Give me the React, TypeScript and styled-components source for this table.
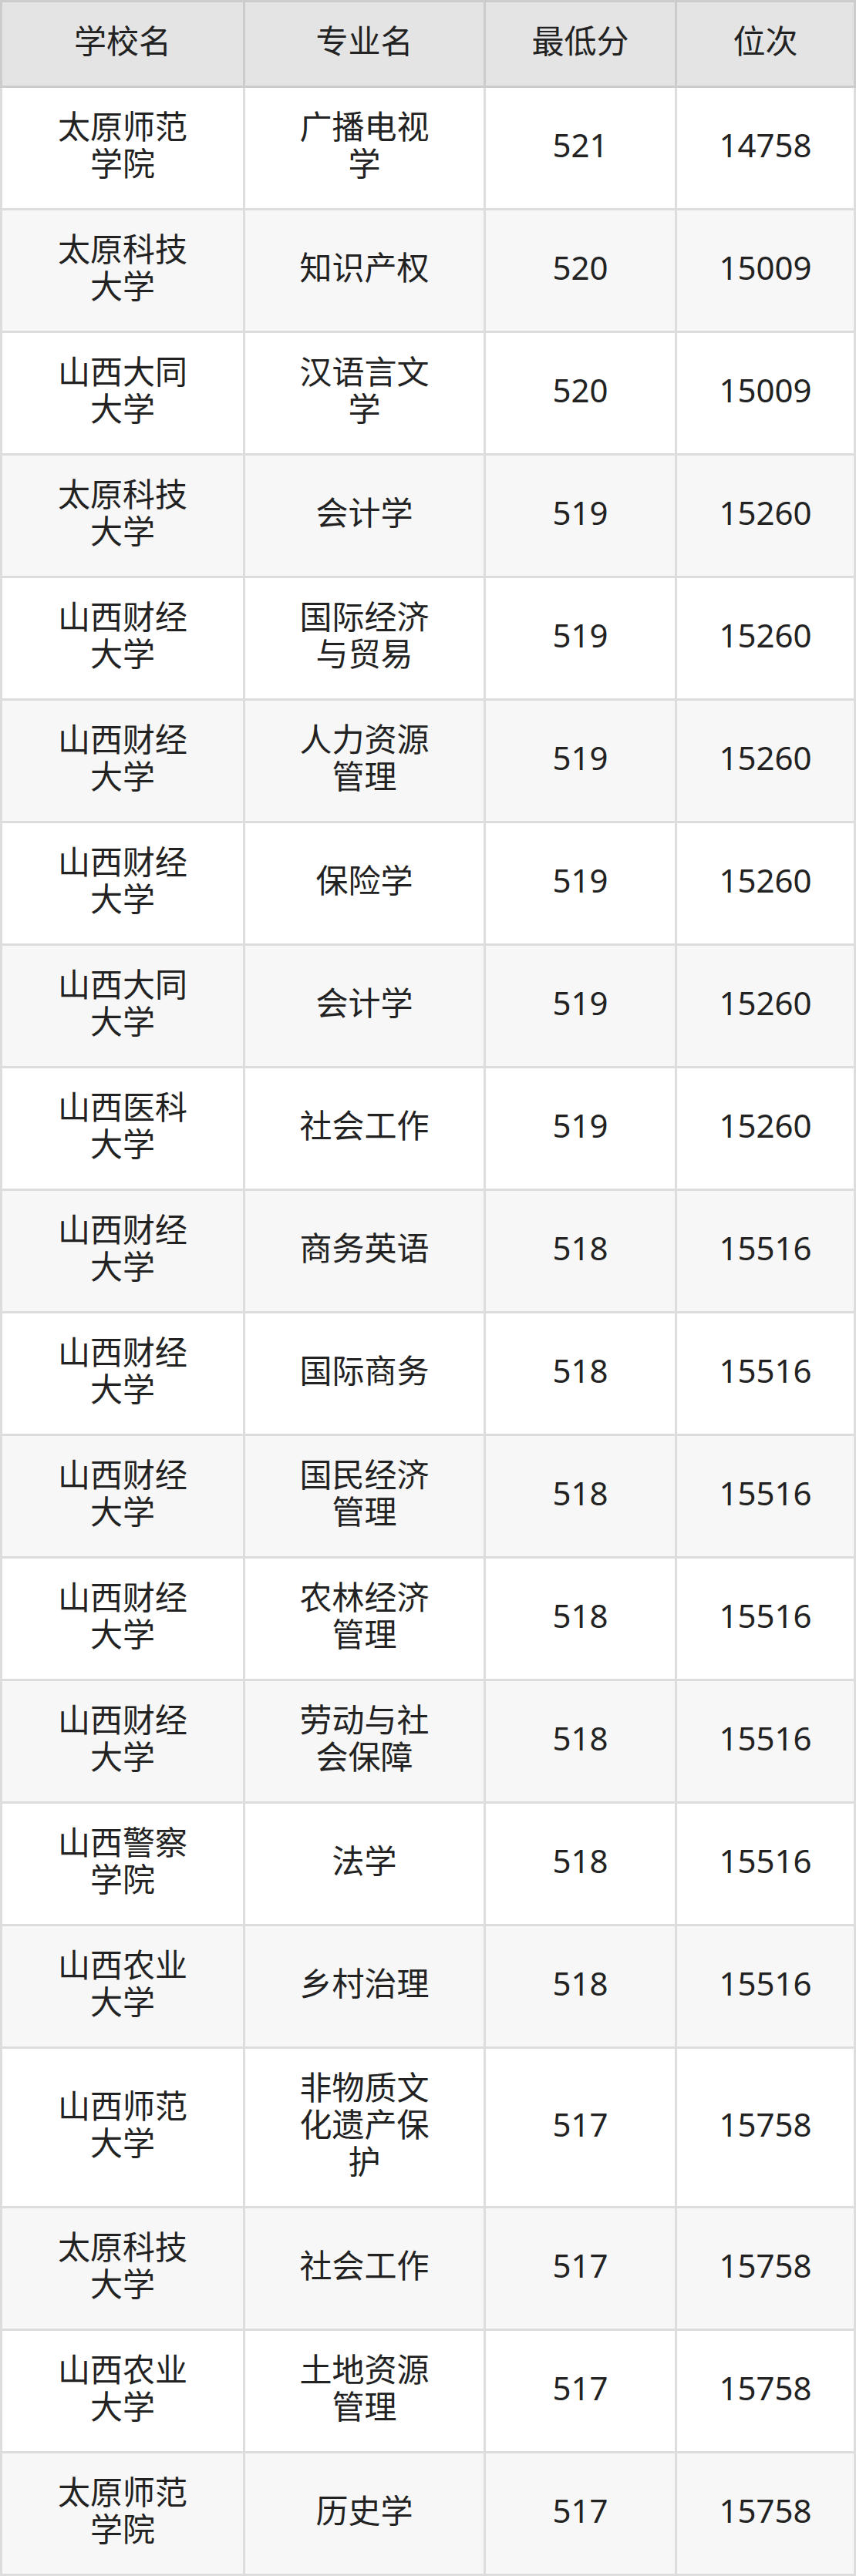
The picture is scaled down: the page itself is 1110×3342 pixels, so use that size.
import React from "react";
import styled, { createGlobalStyle } from "styled-components";

const GlobalStyle = createGlobalStyle`
  html, body {
    margin: 0;
    padding: 0;
    background: #ffffff;
  }
  body {
    font-family: "Noto Sans", "Noto Sans CJK SC", sans-serif;
  }
`;

const Table = styled.table`
  width: 1110px;
  border-collapse: collapse;
  table-layout: fixed;
  font-family: "Noto Sans", "Noto Sans CJK SC", sans-serif;
  font-size: 42px;
  line-height: 48px;
  color: #222222;
`;

const Col = styled.col<{ $w: number }>`
  width: ${(p) => p.$w}px;
`;

const HeadCell = styled.th`
  background: #e4e4e4;
  border: 3px solid #cccccc;
  padding: 26px 20px 34px;
  font-weight: 400;
  text-align: center;
  vertical-align: middle;
`;

const Row = styled.tr<{ $even: boolean }>`
  background: ${(p) => (p.$even ? "#f7f7f7" : "#ffffff")};
`;

const Cell = styled.td`
  border: 3px solid #dddddd;
  padding: 26px 60px 34px;
  text-align: center;
  vertical-align: middle;
`;

const NumCell = styled(Cell)`
  padding: 26px 20px 34px;
`;

type Item = [string, string, number, number];

const rows: Item[] = [
  ["太原师范学院", "广播电视学", 521, 14758],
  ["太原科技大学", "知识产权", 520, 15009],
  ["山西大同大学", "汉语言文学", 520, 15009],
  ["太原科技大学", "会计学", 519, 15260],
  ["山西财经大学", "国际经济与贸易", 519, 15260],
  ["山西财经大学", "人力资源管理", 519, 15260],
  ["山西财经大学", "保险学", 519, 15260],
  ["山西大同大学", "会计学", 519, 15260],
  ["山西医科大学", "社会工作", 519, 15260],
  ["山西财经大学", "商务英语", 518, 15516],
  ["山西财经大学", "国际商务", 518, 15516],
  ["山西财经大学", "国民经济管理", 518, 15516],
  ["山西财经大学", "农林经济管理", 518, 15516],
  ["山西财经大学", "劳动与社会保障", 518, 15516],
  ["山西警察学院", "法学", 518, 15516],
  ["山西农业大学", "乡村治理", 518, 15516],
  ["山西师范大学", "非物质文化遗产保护", 517, 15758],
  ["太原科技大学", "社会工作", 517, 15758],
  ["山西农业大学", "土地资源管理", 517, 15758],
  ["太原师范学院", "历史学", 517, 15758],
];

export default function App() {
  return (
    <>
      <GlobalStyle />
      <Table>
        <colgroup>
          <Col $w={315} />
          <Col $w={312} />
          <Col $w={248} />
          <Col $w={232} />
        </colgroup>
        <thead>
          <tr>
            <HeadCell>学校名</HeadCell>
            <HeadCell>专业名</HeadCell>
            <HeadCell>最低分</HeadCell>
            <HeadCell>位次</HeadCell>
          </tr>
        </thead>
        <tbody>
          {rows.map(([school, major, score, rank], i) => (
            <Row key={i} $even={i % 2 === 1}>
              <Cell>{school}</Cell>
              <Cell>{major}</Cell>
              <NumCell>{score}</NumCell>
              <NumCell>{rank}</NumCell>
            </Row>
          ))}
        </tbody>
      </Table>
    </>
  );
}
